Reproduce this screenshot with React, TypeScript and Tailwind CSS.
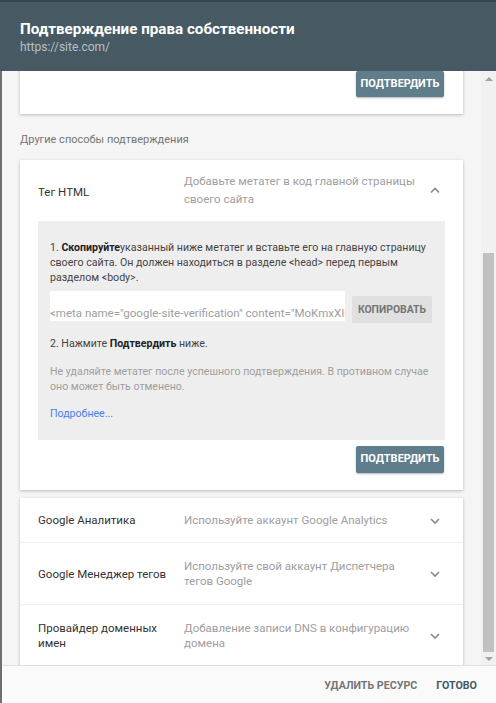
import React from "react";

const font = { fontFamily: "Roboto, 'Noto Sans', Arial, sans-serif" };

function Chevron({ up = false }: { up?: boolean }) {
  return (
    <svg width="24" height="24" viewBox="0 0 24 24" className="shrink-0">
      <path
        d={up ? "M8 14.5l4-4 4 4" : "M8 10l4 4 4-4"}
        fill="none"
        stroke="#8a8a8a"
        strokeWidth="1.6"
      />
    </svg>
  );
}

function Row({ name, desc, h }: { name: string; desc: React.ReactNode; h: string }) {
  return (
    <div className={`flex items-center pl-[18px] pr-[16px] pt-[1px] ${h}`}>
      <div className="w-[146px] shrink-0 pr-[8px] text-[11.5px] leading-[15px] text-[#333333]">{name}</div>
      <div className="flex-1 text-[11.5px] leading-[15px] text-[#9e9e9e]">{desc}</div>
      <Chevron />
    </div>
  );
}

export default function App() {
  return (
    <div style={font} className="w-[496px] h-[703px] flex flex-col bg-[#6f6f6f] pl-[2px] overflow-hidden">
      <div className="h-[71px] shrink-0 bg-[#475a64] border-t-[2px] border-[#37474f] pt-[18px] -ml-[2px] pl-[20px]">
        <div className="text-[15.2px] leading-[19px] font-bold text-white">Подтверждение права собственности</div>
        <div className="text-[12px] leading-[16px] text-[#b4c0c6]">https://site.com/</div>
      </div>
      <div className="flex-1 flex min-h-0 bg-[#f5f5f5]">
        <div className="flex-1 overflow-hidden px-[18px]">
          <div className="-mt-[37px]">
            <div className="bg-white shadow-[0_1px_3px_rgba(0,0,0,0.25)] pt-[37px] pb-[17px] pr-[19px] flex justify-end">
              <div className="h-[26px] w-[88px] bg-[#607d8b] rounded-[2px] shadow-[0_1px_2px_rgba(0,0,0,0.3)] flex items-center justify-center text-[11px] font-bold text-white">ПОДТВЕРДИТЬ</div>
            </div>
            <div className="mt-[18px] text-[11px] leading-[15px] text-[#757575]">Другие способы подтверждения</div>
            <div className="mt-[13px] bg-white shadow-[0_1px_3px_rgba(0,0,0,0.25)] pb-[17px]">
              <div className="flex items-start h-[61px] pl-[18px] pr-[16px] pt-[12px]">
                <div className="w-[146px] shrink-0 pt-[13px] text-[11.5px] leading-[15px] text-[#333333]">Тег HTML</div>
                <div className="flex-1 text-[11.5px] leading-[18px] text-[#9e9e9e]">Добавьте метатег в код главной страницы своего сайта</div>
                <div className="pt-[6px]">
                  <Chevron up />
                </div>
              </div>
              <div className="mx-[18px] bg-[#eeeeee] px-[12px] pt-[19px] pb-[19px] text-[10.6px] leading-[15px] text-[#444444]">
                <div>
                  1. <b className="text-[#222]">Скопируйте</b>указанный ниже метатег и вставьте его на главную страницу своего сайта. Он должен находиться в разделе &lt;head&gt; перед первым разделом &lt;body&gt;.
                </div>
                <div className="mt-[6px] flex items-end gap-[7px]">
                  <div className="w-[295px] h-[30px] bg-white overflow-hidden whitespace-nowrap text-[11.5px] leading-[16px] text-[#9e9e9e] pt-[14px]">
                    &lt;meta name="google-site-verification" content="MoKmxXIl8s9d0fGhQ" /&gt;
                  </div>
                  <div className="w-[80px] h-[27px] -mb-[2px] bg-[#e0e0e0] rounded-[2px] flex items-center justify-center text-[10.4px] font-bold text-[#757575]">КОПИРОВАТЬ</div>
                </div>
                <div className="mt-[15px]">
                  2. Нажмите <b className="text-[#222]">Подтвердить</b> ниже.
                </div>
                <div className="mt-[13px] text-[#9e9e9e]">Не удаляйте метатег после успешного подтверждения. В противном случае оно может быть отменено.</div>
                <div className="mt-[12px] text-[#4a7ef0]">Подробнее...</div>
              </div>
              <div className="flex justify-end pr-[19px] mt-[6px]">
                <div className="h-[27px] w-[88px] bg-[#607d8b] rounded-[2px] shadow-[0_1px_2px_rgba(0,0,0,0.3)] flex items-center justify-center text-[11px] font-bold text-white">ПОДТВЕРДИТЬ</div>
              </div>
            </div>
            <div className="mt-[8px] bg-white shadow-[0_1px_3px_rgba(0,0,0,0.25)]">
              <Row h="h-[44px]" name="Google Аналитика" desc="Используйте аккаунт Google Analytics" />
              <div className="h-px bg-[#eeeeee]" />
              <Row h="h-[61px]" name="Google Менеджер тегов" desc="Используйте свой аккаунт Диспетчера тегов Google" />
              <div className="h-px bg-[#eeeeee]" />
              <Row h="h-[61px]" name="Провайдер доменных имен" desc="Добавление записи DNS в конфигурацию домена" />
            </div>
          </div>
        </div>
        <div className="w-[15px] shrink-0 bg-[#f1f1f1] flex flex-col items-center">
          <div className="h-[16px] flex items-center justify-center">
            <div className="w-0 h-0 border-l-[4px] border-r-[4px] border-b-[4px] border-l-transparent border-r-transparent border-b-[#a3a3a3]" />
          </div>
          <div className="h-[166px]" />
          <div className="w-[11px] h-[399px] bg-[#c1c1c1]" />
          <div className="flex-1 flex items-center justify-center">
            <div className="w-0 h-0 border-l-[4px] border-r-[4px] border-t-[4px] border-l-transparent border-r-transparent border-t-[#a3a3a3]" />
          </div>
        </div>
      </div>
      <div className="h-[38px] shrink-0 bg-[#fafafa] border-t border-[#e0e0e0] flex items-center justify-end gap-[19px] pr-[19px] pt-[4px] text-[10.7px] font-bold">
        <span className="text-[#757575]">УДАЛИТЬ РЕСУРС</span>
        <span className="text-[#455a64]">ГОТОВО</span>
      </div>
    </div>
  );
}
